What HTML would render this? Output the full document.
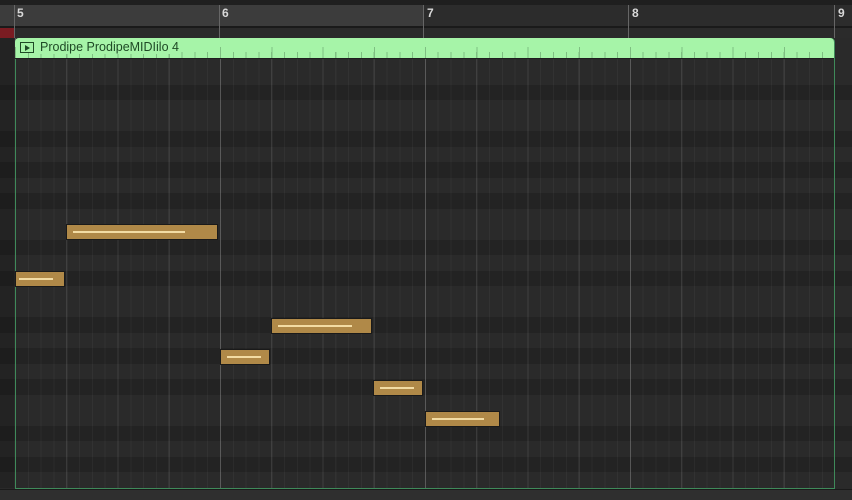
<!DOCTYPE html>
<html><head><style>
body{margin:0;width:852px;height:500px;overflow:hidden;background:#2a2a2a;position:relative;font-family:"Liberation Sans",sans-serif}
div{position:absolute;box-sizing:border-box}
.row{left:0;width:852px;height:15.5px;background:#232323}
.n{height:16px;background:#b08948;border:1px solid #1a1a1a}
.n i{position:absolute;left:6px;top:6px;height:2px;background:#f3dca4}
.num{top:6px;color:#d8d8d8;font-size:12px;font-weight:bold}
</style></head><body>
<div style="left:0;top:0;width:852px;height:5px;background:#1f1f1f"></div>
<div style="left:0;top:5px;width:423px;height:21px;background:#3c3c3c"></div>
<div style="left:423px;top:5px;width:429px;height:21px;background:#2c2c2c"></div>
<div style="left:0;top:26px;width:852px;height:2px;background:#1a1a1a"></div>
<div style="left:0;top:28px;width:852px;height:10px;background:#2b2b2b"></div>
<div style="left:0;top:28px;width:14px;height:10px;background:#7a1c22"></div>
<div style="left:14px;top:5px;width:1px;height:33px;background:#666"></div>
<div style="left:219px;top:5px;width:1px;height:33px;background:#666"></div>
<div style="left:423px;top:5px;width:1px;height:33px;background:#666"></div>
<div style="left:628px;top:5px;width:1px;height:33px;background:#666"></div>
<div style="left:834px;top:5px;width:1px;height:33px;background:#666"></div>
<div class="num" style="left:17px">5</div>
<div class="num" style="left:222px">6</div>
<div class="num" style="left:427px">7</div>
<div class="num" style="left:632px">8</div>
<div class="num" style="left:838px">9</div>
<div style="left:0;top:38px;width:852px;height:450px;background:#2a2a2a"></div>
<div class="row" style="top:84.5px"></div><div class="row" style="top:131px"></div><div class="row" style="top:162px"></div><div class="row" style="top:193px"></div><div class="row" style="top:239.5px"></div><div class="row" style="top:270.5px"></div><div class="row" style="top:317px"></div><div class="row" style="top:348px"></div><div class="row" style="top:379px"></div><div class="row" style="top:425.5px"></div><div class="row" style="top:456.5px"></div>
<div style="left:15px;top:38px;width:820px;height:450px;background:repeating-linear-gradient(90deg,rgba(255,255,255,.14) 0 1px,transparent 1px 205px),repeating-linear-gradient(90deg,rgba(255,255,255,.07) 0 1px,transparent 1px 51.25px),repeating-linear-gradient(90deg,rgba(255,255,255,.035) 0 1px,transparent 1px 12.81px)"></div>
<div style="left:0;top:38px;width:14px;height:450px;background:rgba(0,0,0,.15)"></div>
<div style="left:15px;top:38px;width:820px;height:451px;border:1px solid #3f8a5a;border-radius:4px 4px 0 0"></div>
<div style="left:15px;top:38px;width:819px;height:21px;background:#a6f4a8;border-radius:4px 4px 0 0;border-bottom:1px solid #1f1f1f"></div>
<div style="left:15px;top:52px;width:819px;height:6px;background:repeating-linear-gradient(90deg,#7fbf82 0 1px,transparent 1px 12.81px)"></div>
<div style="left:15px;top:47px;width:819px;height:11px;background:repeating-linear-gradient(90deg,#7fbf82 0 1px,transparent 1px 51.25px)"></div>
<div style="left:20px;top:42px;width:14px;height:11px;border:1px solid #1f4a26;background:#a6f4a8"></div>
<div style="left:25px;top:45px;width:0;height:0;border-left:5px solid #1f4a26;border-top:3px solid transparent;border-bottom:3px solid transparent"></div>
<div style="left:40px;top:40px;font-size:12.5px;color:#1f4a26;background:#a6f4a8;padding:0 2px 0 0">Prodipe ProdipeMIDIilo 4</div>
<div class="n" style="left:66px;top:224px;width:152px"><i style="width:112px"></i></div>
<div class="n" style="left:15px;top:271px;width:50px"><i style="width:34px;left:3px"></i></div>
<div class="n" style="left:271px;top:318px;width:101px"><i style="width:74px"></i></div>
<div class="n" style="left:220px;top:349px;width:50px"><i style="width:34px"></i></div>
<div class="n" style="left:373px;top:380px;width:50px"><i style="width:34px"></i></div>
<div class="n" style="left:425px;top:411px;width:75px"><i style="width:52px"></i></div>
<div style="left:0;top:489px;width:852px;height:11px;background:#2f2f2f;border-top:1px solid #1a1a1a"></div>
</body></html>
